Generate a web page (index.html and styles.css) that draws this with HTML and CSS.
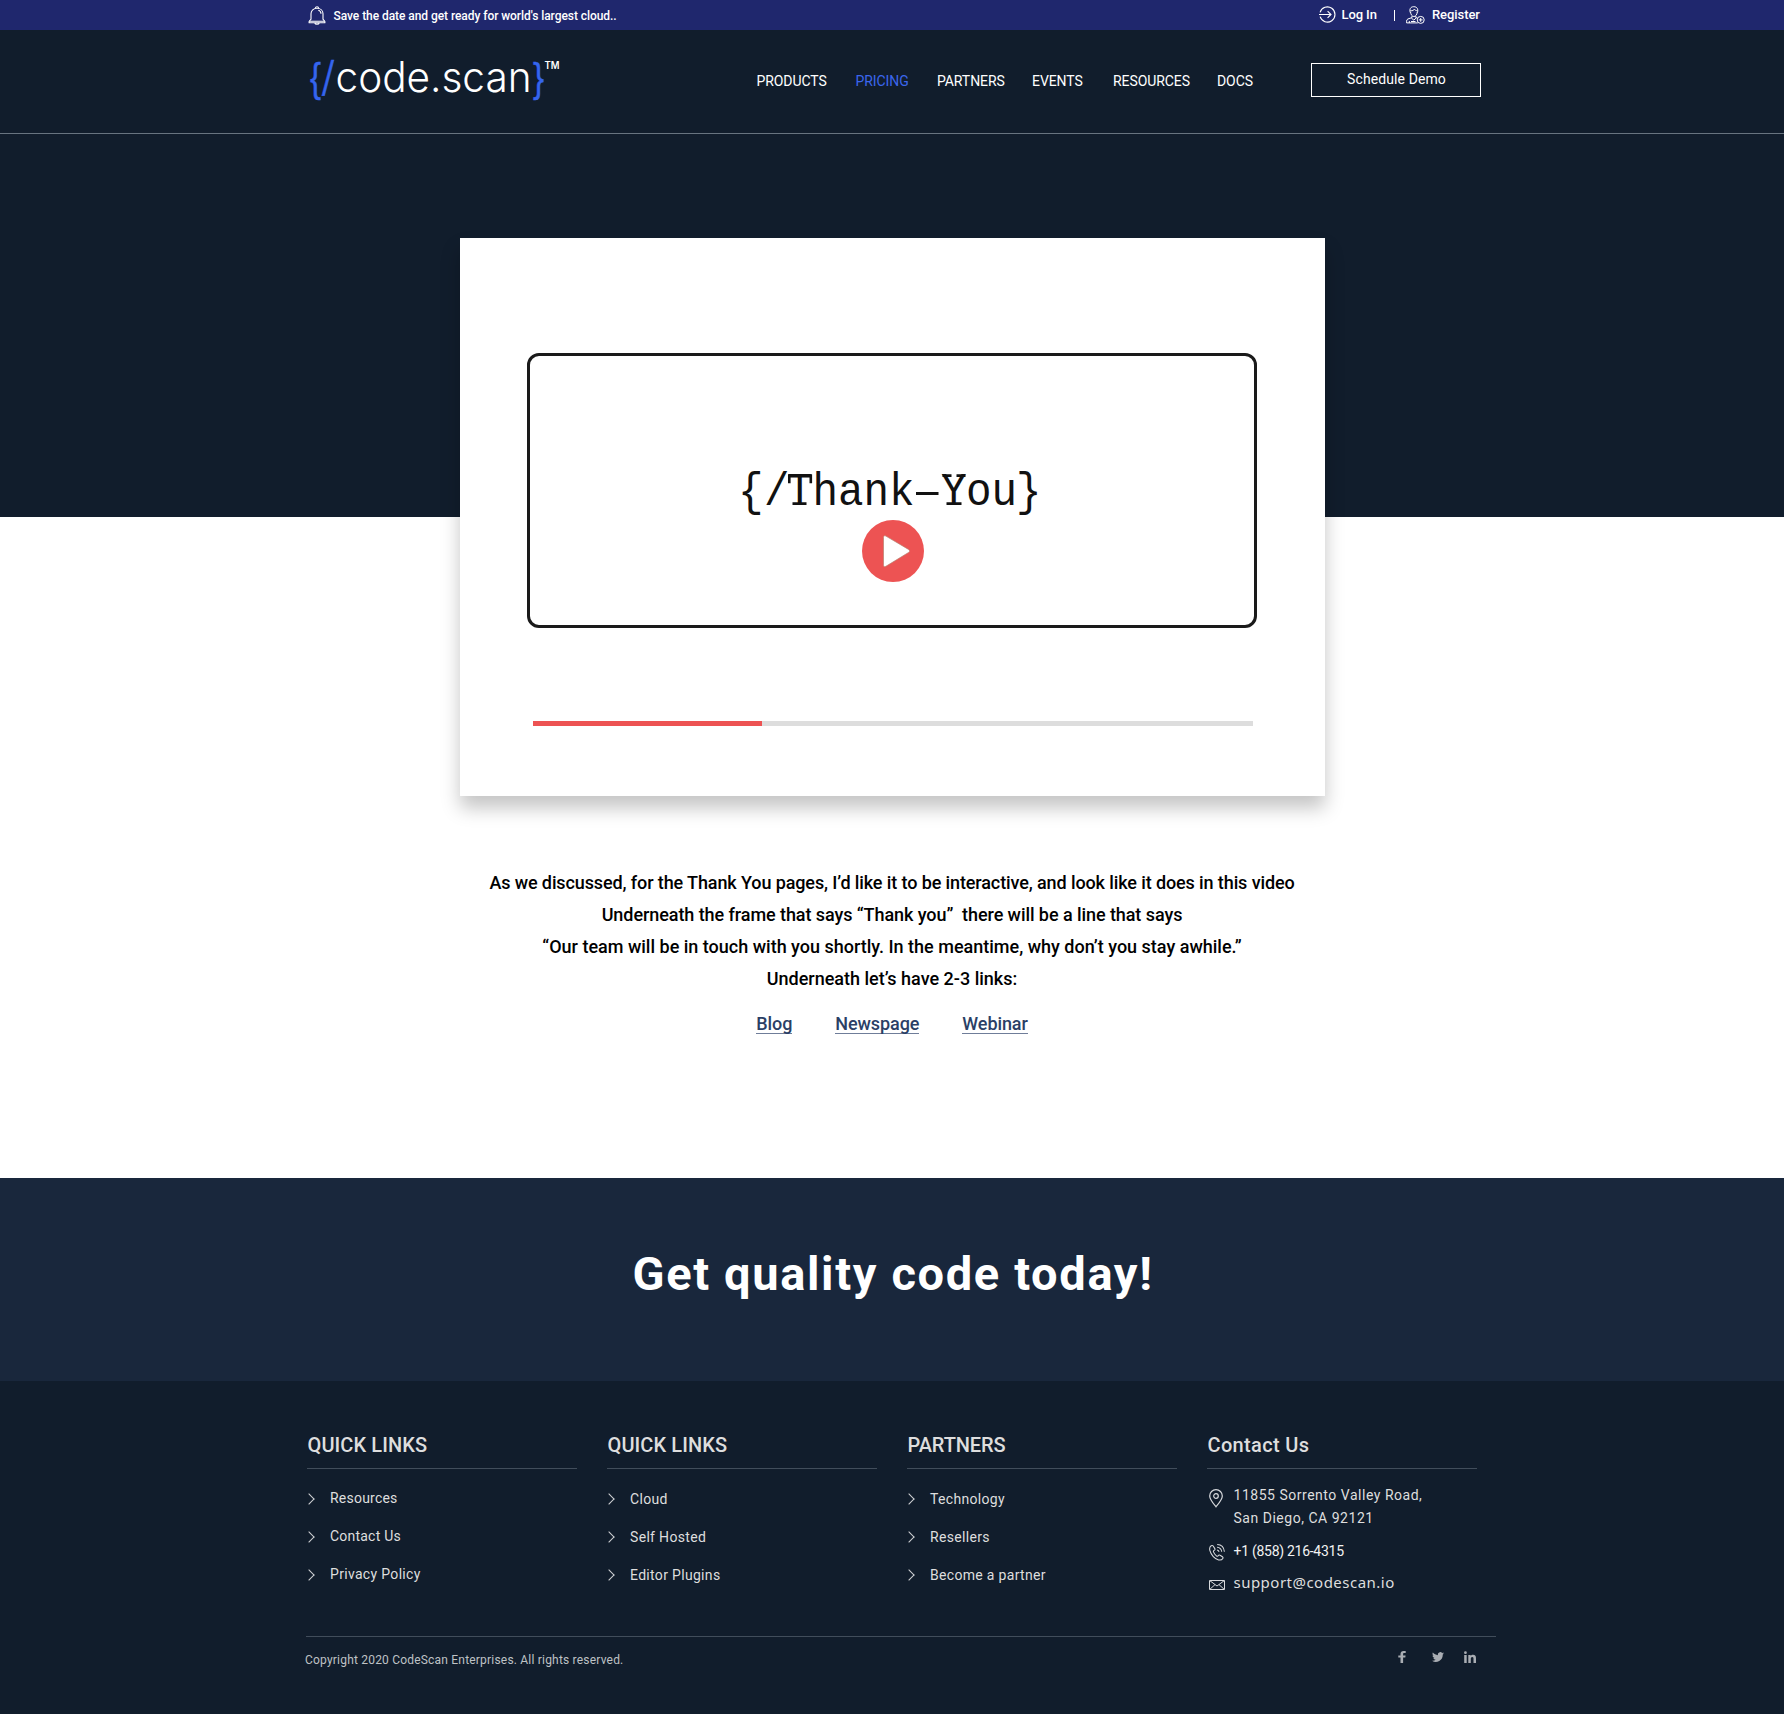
FILE: index.html
```html
<!DOCTYPE html>
<html lang="en">
<head>
<meta charset="utf-8">
<title>CodeScan – Thank You</title>
<link rel="stylesheet" href="styles.css">
</head>
<body>
<div class="topbar">
  <div class="wrap topbar-inner">
    <svg class="i-bell" width="18" height="19" viewBox="0 0 18 19" fill="none" stroke="#fff" stroke-width="1.1" stroke-linejoin="round">
      <path d="M3 13.2V7.8C3 4.6 5.5 2.3 9 2.3s6 2.3 6 5.5v5.4l1.9 2.3v1.2H1.1v-1.2z"/><path d="M1.3 15.2h15.4M7.4 2.2c0-1.9 3.2-1.9 3.2 0M6.8 17c.4 1.5 4 1.5 4.4 0M10.3 4.3c1.7.4 2.7 1.7 2.7 3.5"/>
    </svg>
    <p class="notice">Save the date and get ready for world's largest cloud..</p>
    <div class="account">
      <svg class="i-login" width="17" height="17" viewBox="0 0 17 17" fill="none" stroke="#fff" stroke-width="1.1"><path d="M1.1 6.3A7.6 7.6 0 1 1 1.1 10.7M0 8.5h11.8M8.6 5.1l3.4 3.4-3.4 3.4"/></svg>
      <a class="login">Log In</a>
      <span class="divider"></span>
      <svg class="i-user" width="19" height="18" viewBox="0 0 19 18" fill="none" stroke="#fff" stroke-width="1" stroke-linejoin="round"><path d="M4.200 6.500C3.300 3 4.500.700 7.800.700S12.400 3 11.500 6.500M4.300 4.700c2.300.300 3.400-.400 4.100-1.500.600 1 1.500 1.500 3.100 1.500M4.500 5.800c.300 3 1.600 4.700 3.400 4.700s3.100-1.700 3.400-4.700M6 10v1.600L1.900 13C1 13.400.600 14.100.600 15.200v1.700h11.200M9.800 10v1.500l1.700.600M5.400 12.100l2.400 2 2.300-2M3.300 15v2M5 15.500h4.500"/><circle cx="14.700" cy="13.900" r="3.500"/><path d="M14.700 12v3.800M12.800 13.900h3.800"/></svg>
      <a class="register">Register</a>
    </div>
  </div>
</div>

<header class="header">
  <div class="wrap header-inner">
    <svg class="logo" width="256" height="64" viewBox="0 -10 256 64">
      <g class="logo-mark">
        <text x="2" y="37" font-size="41" textLength="11" lengthAdjust="spacingAndGlyphs">{</text>
        <text class="slash" x="13" y="36" font-size="41" textLength="14" lengthAdjust="spacingAndGlyphs">/</text>
        <text x="225" y="37" font-size="41" textLength="11" lengthAdjust="spacingAndGlyphs">}</text>
      </g>
      <text class="logo-name" x="27.5" y="37" textLength="196" lengthAdjust="spacingAndGlyphs">code.scan</text>
      <text class="logo-tm" x="236.5" y="14" textLength="15" lengthAdjust="spacingAndGlyphs">TM</text>
    </svg>
    <nav class="nav">
      <a>PRODUCTS</a><a class="active">PRICING</a><a>PARTNERS</a><a>EVENTS</a><a>RESOURCES</a><a>DOCS</a>
    </nav>
    <a class="demo">Schedule Demo</a>
  </div>
</header>

<main class="main">
  <section class="player">
    <div class="frame">
      <svg class="thanks" width="304" height="50" viewBox="0 0 304 50">
        <g transform="translate(0 -2.8) scale(1 1.07)">
          <g font-size="42.5">
            <text x="0" y="36">{</text><text x="26" y="36">/</text><text x="49" y="36">T</text><text x="74.5" y="36">hank</text><text x="203" y="36">Y</text><text x="228" y="36">ou</text><text x="278" y="36">}</text>
          </g>
          <path class="serifs" d="M54.500 35h14M51.300 7.500v8.500M72.800 7.500v8.500M208.500 35h15M204.500 8.800h9M218.500 8.800h9M178 25.500h22.500"/>
        </g>
      </svg>
      <svg class="play" width="62" height="62" viewBox="0 0 62 62"><circle cx="31" cy="31" r="31" fill="#ed5353"/><path d="M21.500 17.500c0-1.700 1-2.200 2.400-1.400L46.500 29.400c1.400.800 1.400 2.300 0 3.100L23.900 46.300c-1.400.800-2.400.200-2.400-1.400z" fill="#fff" stroke="#b7806f" stroke-width=".7"/></svg>
    </div>
    <div class="progress"><div class="progress-value"></div></div>
  </section>
  <div class="copy">
    <p class="l1">As we discussed, for the Thank You pages, I’d like it to be interactive, and look like it does in this video</p>
    <p class="l2">Underneath the frame that says “Thank you”&nbsp; there will be a line that says</p>
    <p>“Our team will be in touch with you shortly. In the meantime, why don’t you stay awhile.”</p>
    <p>Underneath let’s have 2-3 links:</p>
  </div>
  <div class="links"><a>Blog</a><a>Newspage</a><a>Webinar</a></div>
</main>

<section class="cta"><h1>Get quality code today!</h1></section>

<footer class="footer">
  <div class="columns">
    <div class="col first">
      <h2>QUICK LINKS</h2>
      <ul><li><a>Resources</a></li><li><a>Contact Us</a></li><li><a>Privacy Policy</a></li></ul>
    </div>
    <div class="col">
      <h2>QUICK LINKS</h2>
      <ul><li><a>Cloud</a></li><li><a>Self Hosted</a></li><li><a>Editor Plugins</a></li></ul>
    </div>
    <div class="col">
      <h2 class="partners">PARTNERS</h2>
      <ul><li><a>Technology</a></li><li><a>Resellers</a></li><li><a>Become a partner</a></li></ul>
    </div>
    <div class="col">
      <h2 class="contact-title">Contact Us</h2>
      <div class="contact">
        <svg class="i-pin" width="15" height="19" viewBox="0 0 15 19" fill="none" stroke="#d8dadd" stroke-width="1.2"><path d="M7 17.800C4.500 14.800.700 10.500.700 7A6.300 6.300 0 0 1 13.300 7c0 3.500-3.800 7.800-6.300 10.800z"/><circle cx="7" cy="7" r="2.300"/></svg>
        <p class="address">11855 Sorrento Valley Road,<br>San Diego, CA 92121</p>
        <svg class="i-phone" width="16" height="17" viewBox="0 0 16 17" fill="none" stroke="#d8dadd" stroke-width="1.05" stroke-linejoin="round"><path d="M2.200 1.800C.700 2.800.300 4.500.900 6.700c1.100 4.200 5 8.300 8.700 9.200 1.800.400 3.300 0 4.200-1.500.400-.700.200-1.300-.400-1.700l-2.300-1.500c-.700-.500-1.300-.300-1.700.300-.600.900-1.200 1-2 .300-1.500-1.200-2.400-2.500-2.900-3.900-.300-.900 0-1.400.800-1.700.700-.300.900-.900.500-1.600L4.200 2C3.700 1.300 3 1.300 2.200 1.800zM8.200.600c4 .200 6.800 2.900 7.200 7.200M8.100 3.300c2.700.200 4.300 1.800 4.600 4.500M8 6c1.200.100 1.900.700 2 1.900"/></svg>
        <p class="phone">+1 (858) 216-4315</p>
        <svg class="i-mail" width="16" height="10" viewBox="0 0 16 10" fill="none" stroke="#d8dadd" stroke-width="1"><path d="M.5.500h15v9H.5zM1 .800l7 5.200 7-5.200M1 9.200l5-4.600M15 9.200l-5-4.600"/></svg>
        <p class="email">support@codescan.io</p>
      </div>
    </div>
  </div>
  <div class="bottom">
    <p>Copyright 2020 CodeScan Enterprises. All rights reserved.</p>
    <div class="social">
      <svg width="8" height="12" viewBox="0 0 8 12"><path d="M2.500 12V6.500H.3V4.400h2.200V3C2.500 1 3.700 0 5.500 0h2.200v2.100H6.300c-.8 0-1.200.3-1.200 1v1.300h2.500l-.3 2.100H5.100V12z"/></svg>
      <svg width="12" height="12" viewBox="0 -2 24 24"><path d="M24 2.600c-.9.400-1.800.7-2.800.8 1-.6 1.800-1.600 2.200-2.700-1 .6-2 1-3.100 1.200A4.900 4.900 0 0 0 11.900 6.400C7.700 6.200 4.100 4.200 1.700 1.200c-1.300 2.200-.7 5.100 1.500 6.600-.8 0-1.600-.2-2.200-.6 0 2.300 1.600 4.400 3.900 4.900-.7.200-1.500.2-2.200.1.600 2 2.400 3.400 4.600 3.400A9.900 9.900 0 0 1 0 17.600a14 14 0 0 0 21.500-12.400c1-.7 1.800-1.600 2.500-2.600z"/></svg>
      <svg width="12" height="12" viewBox="0 0 12 12"><path d="M.2 4h2.500v8H.2zM1.450.3a1.400 1.400 0 1 1 0 2.800 1.400 1.400 0 0 1 0-2.800zM4.300 4h2.400v1.100C7.100 4.300 8 3.800 9 3.800c2.300 0 3 1.400 3 3.600V12H9.500V7.800c0-1.100-.2-1.900-1.200-1.900-1.100 0-1.500.8-1.500 1.900V12H4.300z"/></svg>
    </div>
  </div>
</footer>
</body>
</html>
```
FILE: styles.css
```css
* { box-sizing: border-box; }
body, p, h1, h2, ul { margin: 0; padding: 0; }
body { background: #fff; color: #fff; font-family: Roboto, "Liberation Sans", sans-serif; }
svg { display: block; flex: none; }
ul { list-style: none; }
p, a, li, h1, h2 { white-space: nowrap; }
.wrap { width: 1173px; margin-left: 308px; display: flex; align-items: flex-start; }

.topbar { height: 30px; background: #1f276d; }
.i-bell { margin-top: 6px; }
.notice { margin-left: 7.500px; font-size: 12px; font-weight: 500; line-height: 32px; letter-spacing: -.06px; }
.account { margin-left: auto; display: flex; align-items: flex-start; font-size: 13px; font-weight: 500; line-height: 29px; }
.i-login { margin-top: 6px; }
.login { margin-left: 5.500px; width: 52.500px; letter-spacing: -.1px; }
.divider { width: 1px; height: 11px; margin-top: 10px; background: #fff; }
.i-user { margin: 6px 7px 0 11px; }
.register { width: 49px; letter-spacing: -.07px; }

.header { height: 104px; background: #111d2c; border-bottom: 1px solid #687480; }
.logo { margin-top: 15px; }
.logo text { fill: #fff; font-family: Inter, "Liberation Sans", sans-serif; }
.logo .logo-mark text { fill: #3565ee; font-family: "Liberation Sans", sans-serif; stroke: #3565ee; stroke-width: .5; }
.logo .logo-mark .slash { font-family: Inter, sans-serif; font-weight: 300; }
.logo .logo-name { font-size: 42px; font-weight: 300; }
.logo .logo-tm { font-size: 10px; font-weight: 600; }
.nav { margin: 41px 0 0 192.500px; display: grid; grid-template-columns: 99px 81.500px 95px 81px 104px 40px; font-size: 14px; line-height: 20px; letter-spacing: -.08px; }
.nav .active { color: #3b66ec; }
.demo { width: 170px; height: 34px; margin: 33px 0 0 auto; padding-left: 1px; border: 1px solid #fff; text-align: center; font-size: 14px; line-height: 30px; letter-spacing: .1px; }

.main { height: 1044px; padding-top: 104px; background: linear-gradient(#111d2c 383px, #fff 383px); color: #000; }
.player { width: 865px; height: 558px; margin-left: 460px; padding-top: 115px; background: #fff; box-shadow: 0 12px 18px rgba(0,0,0,.23); }
.frame { width: 730px; height: 275px; margin-left: 67px; padding: 113px 0 0 208px; border: 3px solid #1a1a1a; border-radius: 12px; }
.thanks { overflow: visible; font-family: "Liberation Mono", monospace; fill: #111; }
.serifs { fill: none; stroke: #111; stroke-width: 2.600; }
.play { margin: 1px 0 0 124px; }
.progress { width: 720px; height: 5px; margin: 93px 0 0 73px; background: #ddd; }
.progress-value { width: 229px; height: 5px; background: #ed5353; }
.copy { width: 865px; margin: 71px 0 0 459.500px; text-align: center; font-size: 18px; font-weight: 500; line-height: 32px; }
.copy .l1 { letter-spacing: -.11px; }
.copy .l2 { letter-spacing: -.07px; }
.links { width: 865px; margin: 17px 0 0 459.500px; display: flex; justify-content: center; gap: 43px; font-size: 18px; font-weight: 500; line-height: 24px; letter-spacing: -.08px; color: #2b3f66; }
.links a { height: 22px; border-bottom: 1px solid #6f7d99; }

.cta { height: 203px; padding-top: 66px; background: #19273c; text-align: center; }
.cta h1 { padding-left: 2px; font-size: 47px; line-height: 60px; font-weight: 700; letter-spacing: 1.650px; }

.footer { height: 333px; padding-top: 50px; background: #111d2c; color: #dedede; }
.columns { height: 205px; margin-left: 307px; display: grid; grid-template-columns: 270px 270px 270px 270px; column-gap: 30px; }
.col h2 { height: 38px; padding-left: .5px; border-bottom: 1px solid #414d5b; font-size: 20px; line-height: 28px; font-weight: 500; letter-spacing: .1px; }
.col h2.partners { letter-spacing: -.1px; }
.col h2.contact-title { letter-spacing: .35px; }
.col ul { padding-top: 11px; }
.col li { display: flex; align-items: center; height: 38px; font-size: 14px; line-height: 38px; letter-spacing: .32px; }
.first li a { padding-bottom: 2px; }
.first li:not(:last-child) a { letter-spacing: .22px; }
.col li::before { content: ""; width: 7px; height: 7px; margin: 0 17px 0 -2px; border: solid #cfd2d5; border-width: 1px 1px 0 0; transform: rotate(45deg); }
.contact { padding: 15px 0 0 2px; display: grid; grid-template-columns: 24.500px auto; row-gap: 11px; font-size: 14px; }
.i-pin { margin-top: 5px; }
.i-phone { margin-top: 3px; }
.i-mail { margin-top: 8px; }
.address { line-height: 23px; letter-spacing: .52px; }
.phone { line-height: 20px; letter-spacing: -.28px; color: #f2f2f2; }
.email { font-family: "Noto Sans", sans-serif; font-size: 15px; line-height: 20px; letter-spacing: .48px; }
.bottom { width: 1190px; margin-left: 306px; padding-top: 13px; border-top: 1px solid #414d5b; display: flex; justify-content: space-between; align-items: flex-start; color: #bfc2c5; }
.bottom p { margin-left: -1px; font-size: 12px; line-height: 20px; letter-spacing: .2px; }
.social { display: flex; gap: 25px; margin: 1px 20px 0 0; fill: #a9adb3; }
.social svg:first-child { margin-right: 1px; }
.social svg:last-child { margin-left: -5px; }
```
